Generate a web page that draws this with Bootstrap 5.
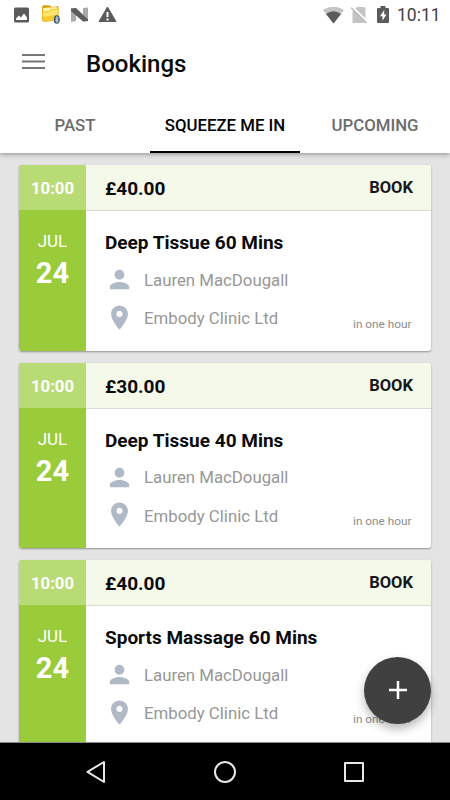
<!DOCTYPE html>
<html lang="en">
<head>
<meta charset="utf-8">
<meta name="viewport" content="width=device-width, initial-scale=1">
<title>Bookings</title>
<link href="https://cdn.jsdelivr.net/npm/bootstrap@5.3.0/dist/css/bootstrap.min.css" rel="stylesheet">
<style>
body{font-family:Roboto,sans-serif;background:#e4e4e4;color:#0b0b0b}
svg{display:block;flex:none}
.screen{width:450px;height:800px}
.app-header{height:153px;box-shadow:0 1px 5px rgba(0,0,0,.4);z-index:2}
.status{height:30px;padding:0 11px 0 13px}
.icon-n{margin-left:7px}
.icon-alert,.icon-battery{margin-left:9px}
.icon-sim{margin-left:7px}
.clock{font-size:17.5px;line-height:30px;color:#424242;width:42px;margin-left:8px;white-space:nowrap}
.titlebar{height:67px;padding-left:22px}
.menu-icon{margin-bottom:4px}
.page-title{font-size:24px;font-weight:500;line-height:30px;margin-left:41px;color:#0a0a0a}
.tabs{height:56px}
.tabs .nav-link{height:56px;padding:0;border-radius:0;font-size:16.8px;font-weight:500;line-height:57px;color:#6c6c6c;white-space:nowrap}
.tabs .nav-link.active{color:#000;box-shadow:inset 0 -2px #000}
.feed{padding:12px 19px 0;gap:12px}
.booking{height:185.5px;border:0;border-radius:3px;box-shadow:0 1px 2px rgba(0,0,0,.36);flex:none}
.day{width:67px;background:#9acb3b}
.slot{height:45px;line-height:47px;background:#b8db76;font-size:16.8px;font-weight:700}
.month{font-size:17px;line-height:20px;margin-top:21px}
.date{font-size:29px;font-weight:700;line-height:34px;margin-top:5px}
.price-row{height:46px;background:#f5f9ea;border-bottom:1px solid #d9dcd2;padding:0 18px 0 19px}
.price{font-size:19px;font-weight:700;line-height:47px}
.book{font-size:16.5px;font-weight:700;line-height:45px;color:#16181b}
.details{padding:20px 19px 0}
.service{font-size:19px;font-weight:700;line-height:24px;white-space:nowrap}
.person,.place{font-size:16.8px;line-height:24px;color:#979797;white-space:nowrap}
.person{margin-top:10px}
.place{margin-top:9.5px}
.person svg,.place svg{margin-right:10px;fill:#b0bac7}
.place svg{position:relative;top:-1px}
.when{font-size:11.8px;line-height:16px;color:#8c8c8c;right:19.5px;bottom:19px}
.fab{width:67px;height:67px;right:19px;top:656.5px;background:#404040;z-index:3;box-shadow:0 5px 10px rgba(0,0,0,.28)}
.system-nav{height:58px;background:#000;border-top:1px solid #8a8a8a;z-index:2}
</style>
<script src="https://cdn.jsdelivr.net/npm/bootstrap@5.3.0/dist/js/bootstrap.bundle.min.js"></script>
</head>
<body>
<svg width="0" height="0" class="position-absolute" aria-hidden="true">
<symbol id="person" viewBox="0 0 24 24"><path d="M12 12c2.210 0 4-1.790 4-4s-1.790-4-4-4-4 1.790-4 4 1.790 4 4 4zm0 2c-2.670 0-8 1.340-8 4v2h16v-2c0-2.660-5.330-4-8-4z"/></symbol>
<symbol id="pin" viewBox="0 0 24 24"><path d="M12 2C8.130 2 5 5.130 5 9c0 5.250 7 13 7 13s7-7.750 7-13c0-3.870-3.130-7-7-7zm0 9.500c-1.380 0-2.500-1.120-2.500-2.500s1.120-2.500 2.500-2.500 2.500 1.120 2.500 2.500-1.120 2.500-2.500 2.500z"/></symbol>
</svg>
<div class="screen position-relative d-flex flex-column overflow-hidden">
<header class="app-header bg-white position-relative flex-shrink-0">
<div class="status d-flex align-items-center">
<svg width="17" height="17" viewBox="0 0 17 17"><path fill="#5b5b5b" fill-rule="evenodd" d="M2.500 .5h12Q16 .5 16 2v12Q16 15.500 14.500 15.500h-12Q1 15.500 1 14v-12Q1 .5 2.500 .5zM3 13h11v-2.500L11 6.500 7.800 10.500 5.800 8.500 3 11.500z"/></svg>
<svg class="ms-2" width="26" height="22" viewBox="38 4 26 22"><path fill="#d9a317" d="M42 6.500L44 5l6 .5 2 1.500 6-1 .5 2v12l-15 2-1.500-2z"/><path fill="#fff3a8" d="M43 8l14-1v3L43 12z"/><path fill="#f6cc32" d="M42 12l7-1 2-2 8-.5-2 12-14 1.500z"/><path fill="#ffe673" d="M43 13l7-1 2-2 6-.3-1 5-14 2z"/><ellipse cx="56.800" cy="19.500" rx="3" ry="4.300" fill="#415d6b"/><path d="M55.300 18l3 3-1.500 1.500v-6l1.500 1.500-3 3" fill="none" stroke="#e7eef0" stroke-width=".8"/></svg>
<svg class="icon-n" width="18" height="16" viewBox="0 0 18 16"><path fill="#ababab" d="M0 1.500l5-.5v13l-5 1zM12 1l5-.5V14l-5 .5z"/><path fill="#5d5d5d" d="M0 1.500L5 1l12 11.500V14l-5 .5L0 4z"/></svg>
<svg class="icon-alert" width="20" height="18" viewBox="0 0 20 18"><path fill="#5b5b5b" stroke="#5b5b5b" stroke-linejoin="round" d="M9.500 1L18 15.500H1z"/><path stroke="#fff" stroke-width="2" d="M9.500 6v5M9.500 12.500v2"/></svg>
<svg class="ms-auto" width="21" height="17" viewBox="0 0 21 17"><path fill="#c4c4c4" d="M0 3Q10.500-3.500 21 3L10.500 16.500z"/><path fill="#5b5b5b" d="M3 7Q10.500 1.500 18 7L10.500 16.500z"/></svg>
<svg class="icon-sim" width="17" height="18" viewBox="0 0 17 18"><path fill="#c4c4c4" d="M6 1h7q1.500 0 1.500 1.500v13Q14 17 13 17H3q-1.500 0-1.500-1.500v-10z"/><path stroke="#fff" stroke-width="2" d="M1 .5L17 16.500"/><path stroke="#b8b8b8" stroke-width="1.300" d="M0 1.500L15.500 17"/></svg>
<svg class="icon-battery" width="12" height="18" viewBox="0 0 12 18"><path fill="#5b5b5b" d="M3.500 0h5v2H11q1 0 1 1v13q0 1-1 1H1q-1 0-1-1V3q0-1 1-1h2.500z"/><path fill="#fff" d="M7.200 4L3 10.200h2.500v4.600L9.500 8.500H7.200z"/></svg>
<div class="clock">10:11</div>
</div>
<div class="titlebar d-flex align-items-center">
<svg class="menu-icon" width="23" height="17" viewBox="0 0 23 17" stroke="#777" stroke-width="2"><path d="M0 2h23M0 8.500h23M0 15h23"/></svg>
<h1 class="page-title mb-0">Bookings</h1>
</div>
<nav class="tabs nav nav-justified flex-nowrap">
<a class="nav-link col-4" href="#">PAST</a>
<a class="nav-link col-4 active" href="#">SQUEEZE ME IN</a>
<a class="nav-link col-4" href="#">UPCOMING</a>
</nav>
</header>
<main class="feed flex-grow-1 d-flex flex-column overflow-hidden">
<article class="booking card flex-row overflow-hidden">
<div class="day text-white text-center"><div class="slot">10:00</div><div class="month">JUL</div><div class="date">24</div></div>
<div class="flex-grow-1"><div class="price-row d-flex justify-content-between"><span class="price">£40.00</span><span class="book">BOOK</span></div>
<div class="details"><div class="service">Deep Tissue 60 Mins</div><div class="person d-flex align-items-center"><svg width="29" height="29"><use href="#person"/></svg>Lauren MacDougall</div><div class="place d-flex align-items-center"><svg width="29" height="29"><use href="#pin"/></svg>Embody Clinic Ltd</div></div></div>
<span class="when position-absolute">in one hour</span>
</article>
<article class="booking card flex-row overflow-hidden">
<div class="day text-white text-center"><div class="slot">10:00</div><div class="month">JUL</div><div class="date">24</div></div>
<div class="flex-grow-1"><div class="price-row d-flex justify-content-between"><span class="price">£30.00</span><span class="book">BOOK</span></div>
<div class="details"><div class="service">Deep Tissue 40 Mins</div><div class="person d-flex align-items-center"><svg width="29" height="29"><use href="#person"/></svg>Lauren MacDougall</div><div class="place d-flex align-items-center"><svg width="29" height="29"><use href="#pin"/></svg>Embody Clinic Ltd</div></div></div>
<span class="when position-absolute">in one hour</span>
</article>
<article class="booking card flex-row overflow-hidden">
<div class="day text-white text-center"><div class="slot">10:00</div><div class="month">JUL</div><div class="date">24</div></div>
<div class="flex-grow-1"><div class="price-row d-flex justify-content-between"><span class="price">£40.00</span><span class="book">BOOK</span></div>
<div class="details"><div class="service">Sports Massage 60 Mins</div><div class="person d-flex align-items-center"><svg width="29" height="29"><use href="#person"/></svg>Lauren MacDougall</div><div class="place d-flex align-items-center"><svg width="29" height="29"><use href="#pin"/></svg>Embody Clinic Ltd</div></div></div>
<span class="when position-absolute">in one hour</span>
</article>
</main>
<button class="fab position-absolute rounded-circle border-0 p-0 d-flex align-items-center justify-content-center" aria-label="Add booking"><svg width="18" height="18" viewBox="0 0 18 18"><path stroke="#fff" stroke-width="2.500" d="M0 9h18M9 0v18"/></svg></button>
<footer class="system-nav position-relative flex-shrink-0 d-flex justify-content-center align-items-center">
<svg width="280" height="24" viewBox="0 0 280 24" fill="none" stroke="#e8e8e8" stroke-width="2" stroke-linejoin="round"><path d="M2.500 11.800L19 2v20z"/><circle cx="140" cy="12" r="10"/><rect x="260" y="3" width="18" height="18"/></svg>
</footer>
</div>
</body>
</html>
